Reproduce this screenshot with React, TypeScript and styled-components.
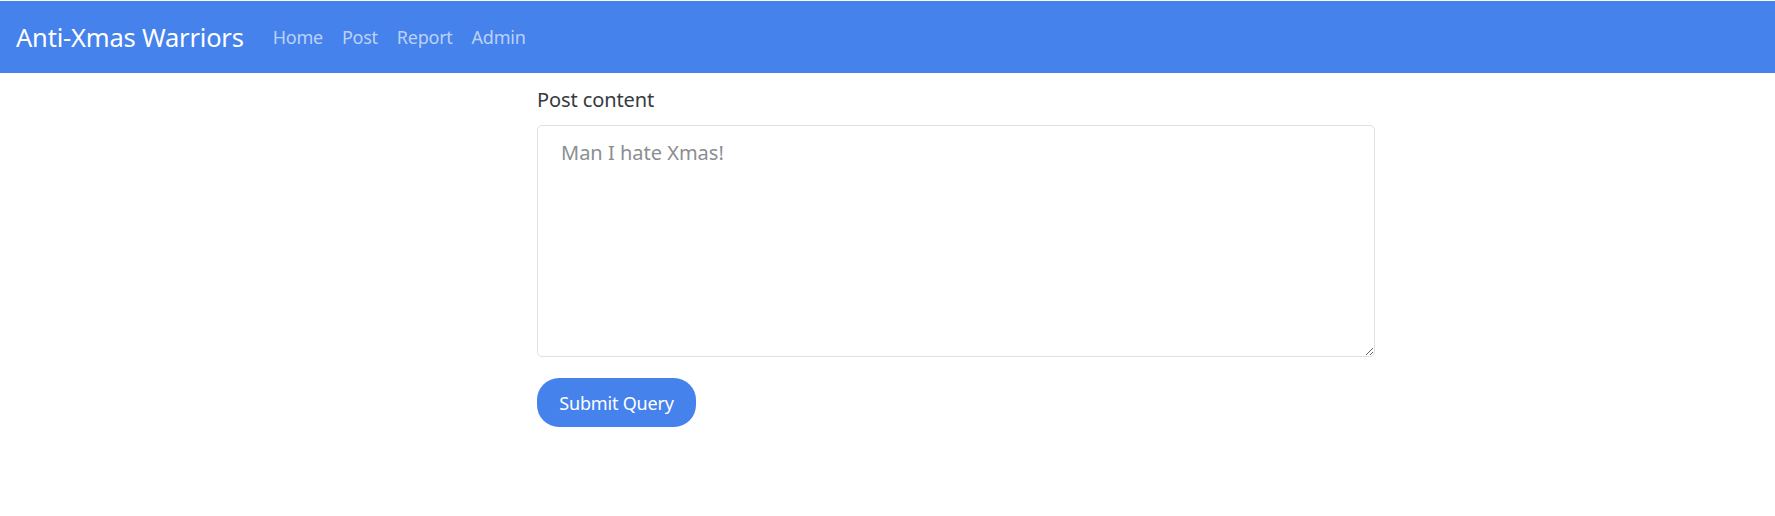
import React from "react";
import styled, { createGlobalStyle } from "styled-components";

const Global = createGlobalStyle`
  html, body { margin: 0; padding: 0; background: #fff; }
  body { font-family: "Noto Sans", "Open Sans", sans-serif; color: #343a40; }
`;

const Navbar = styled.nav`
  margin-top: 1px;
  height: 72px;
  background: #4582ec;
  display: flex;
  align-items: center;
  padding: 0 16px;
  box-sizing: border-box;
`;

const Brand = styled.a`
  font-size: 25.5px;
  color: #fff;
  text-decoration: none;
  margin-right: 29px;
  letter-spacing: -0.2px;
`;

const NavList = styled.div`
  display: flex;
  gap: 19px;
`;

const NavLink = styled.a`
  font-size: 18px;
  color: rgba(255, 255, 255, 0.65);
  text-decoration: none;
  letter-spacing: -0.25px;
`;

const Main = styled.main`
  padding: 12px 0 0 537px;
  display: flex;
  flex-direction: column;
  align-items: flex-start;
`;

const Label = styled.label`
  font-size: 20px;
  color: #343a40;
  line-height: 1.5;
  margin-bottom: 10px;
  letter-spacing: -0.1px;
`;

const TextArea = styled.textarea`
  box-sizing: border-box;
  width: 838px;
  height: 232px;
  border: 1px solid #e0e0e0;
  border-radius: 5px;
  padding: 12px 23px;
  font-family: "Noto Sans", "Open Sans", sans-serif;
  font-size: 20px;
  line-height: 1.5;
  color: #343a40;
  margin: 0 0 21px;
  outline: none;
  &::placeholder { color: #8a8e92; }
`;

const Button = styled.button`
  height: 49px;
  width: 159px;
  border: none;
  border-radius: 22px;
  background: #4582ec;
  color: #fff;
  font-family: "Noto Sans", "Open Sans", sans-serif;
  font-size: 18px;
  letter-spacing: -0.2px;
  padding: 0;
  cursor: pointer;
`;

export default function App() {
  return (
    <>
      <Global />
      <Navbar>
        <Brand href="#">Anti-Xmas Warriors</Brand>
        <NavList>
          <NavLink href="#">Home</NavLink>
          <NavLink href="#">Post</NavLink>
          <NavLink href="#">Report</NavLink>
          <NavLink href="#">Admin</NavLink>
        </NavList>
      </Navbar>
      <Main>
        <Label htmlFor="content">Post content</Label>
        <TextArea id="content" placeholder="Man I hate Xmas!" />
        <Button type="submit">Submit Query</Button>
      </Main>
    </>
  );
}
